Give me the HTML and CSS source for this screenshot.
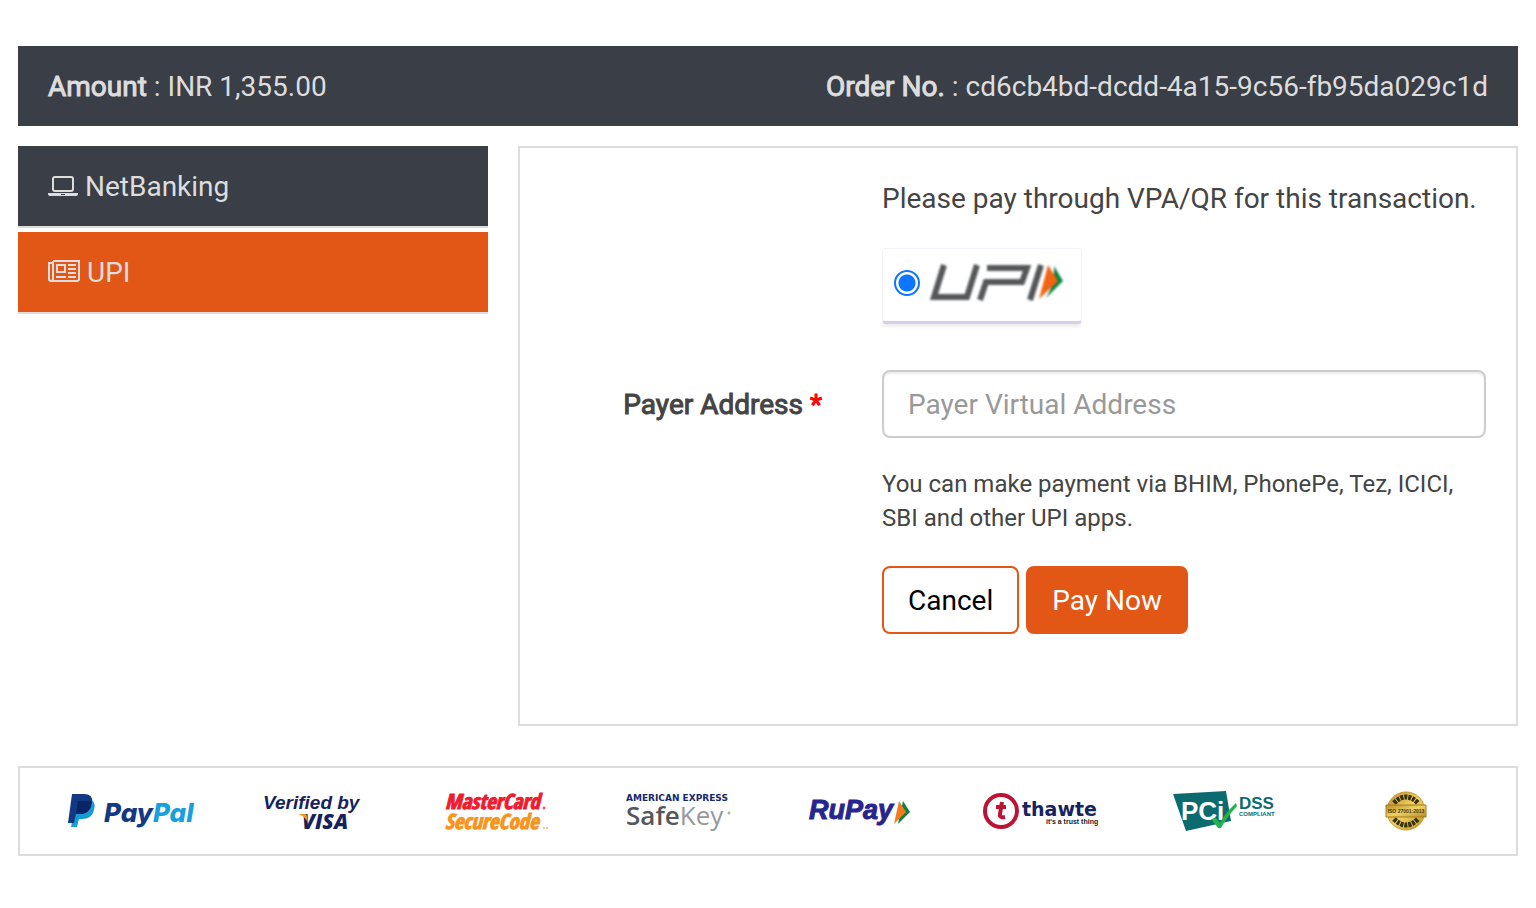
FILE: index.html
```html
<!DOCTYPE html>
<html lang="en">
<head>
<meta charset="utf-8">
<meta name="viewport" content="width=device-width, initial-scale=1">
<title>Payment</title>
<link rel="stylesheet" href="styles.css">
</head>
<body>
<header class="summary">
  <div><span class="strong">Amount</span> : INR 1,355.00</div>
  <div><span class="strong">Order No.</span> : cd6cb4bd-dcdd-4a15-9c56-fb95da029c1d</div>
</header>
<main class="layout">
  <nav class="methods">
    <a class="method" href="#netbanking">
      <svg width="30" height="24" viewBox="0 0 30 24" fill="none" stroke="currentColor" stroke-width="2"><rect x="5" y="2" width="20" height="14" rx="2"/><path fill="currentColor" stroke="none" d="M0 18h30v1q0 2-3 2H3q-3 0-3-2z"/><path class="notch" stroke-width="1" d="M13 19.500h4"/></svg>
      <span>NetBanking</span>
    </a>
    <a class="method active" href="#upi" aria-current="page">
      <svg width="32" height="26" viewBox="0 0 32 26" fill="none" stroke="currentColor" stroke-width="2"><path d="M5 1h26v18q0 2-2 2H3q-2 0-2-2V3h4M5 1v18q0 2-2 2"/><path d="M9 5h8v7H9zM20 5h8M20 9h8M20 13h8M8 17h10M20 17h8"/></svg>
      <span>UPI</span>
    </a>
  </nav>
  <form class="panel">
    <p class="field">Please pay through VPA/QR for this transaction.</p>
    <label class="field upi-card">
      <input type="radio" name="mode" checked aria-label="UPI">
      <svg class="upi-logo" width="136" height="42" viewBox="0 0 136 42" aria-hidden="true"><g fill="none" stroke="#555759" stroke-width="6"><path d="M14 3L4 35h33L47 3"/><path d="M50 38L56 20h36L97 6H57M111 3L100 38"/></g><path fill="#0c8345" d="M124 4l9 15-17 17 8-16z"/><path fill="#f26411" d="M118 3l10 16-19 18z"/></svg>
    </label>
    <label class="field-label" for="vpa">Payer Address <span class="required">*</span></label>
    <input class="vpa" id="vpa" type="text" placeholder="Payer Virtual Address">
    <p class="field note">You can make payment via BHIM, PhonePe, Tez, ICICI, SBI and other UPI apps.</p>
    <div class="field actions">
      <button class="btn" type="button">Cancel</button>
      <button class="btn primary" type="button">Pay Now</button>
    </div>
  </form>
</main>
<footer class="partners">
  <svg class="logo" viewBox="0 0 130 46" role="img" aria-label="PayPal">
    <path fill="#179bd7" d="M10 12h16q4 4 2 10-2 9-12 9h-3l-2 8H5z"/>
    <path fill="#123984" d="M6 6h12q9 0 8 8-1 12-12 12h-4l-2 9H2z"/>
    <path fill="#0b2466" d="M12 13h13q1 3-1 7-3 6-10 6h-4z"/>
    <text class="paypal" x="38" y="34"><tspan fill="#123984">Pay</tspan><tspan fill="#179fde">Pal</tspan></text>
  </svg>
  <svg class="logo" viewBox="0 0 130 46" role="img" aria-label="Verified by Visa">
    <text class="verified" x="15" y="21">Verified by</text>
    <text class="visa" x="54" y="41">VISA</text>
    <path fill="#f7981d" d="M50 26h7q2 0 2 3l1 6q-3-7-10-9z"/>
  </svg>
  <svg class="logo" viewBox="0 0 130 46" role="img" aria-label="MasterCard SecureCode">
    <text class="mastercard red" x="15" y="21">MasterCard</text>
    <text class="mastercard orange" x="15" y="41">SecureCode</text>
    <circle cx="114" cy="20" r="1" fill="none" stroke="#ee1c2e"/><path stroke="#f7941d" d="M113 40h2M116 40h2"/>
  </svg>
  <svg class="logo" viewBox="0 0 130 46" role="img" aria-label="American Express SafeKey">
    <text class="amex" x="14" y="13">AMERICAN EXPRESS</text>
    <text class="safekey" x="14" y="37"><tspan class="safe">Safe</tspan><tspan fill="#96989b">Key</tspan></text>
    <circle cx="117" cy="25" r="1" fill="none" stroke="#96989b"/>
  </svg>
  <svg class="logo" viewBox="0 0 130 46" role="img" aria-label="RuPay">
    <text class="rupay" x="15" y="31">RuPay</text>
    <path fill="#0c8345" d="M109 13l7 11-12 12z"/><path fill="#f47b20" d="M105 13l7 11-12 12z"/>
  </svg>
  <svg class="logo" viewBox="0 0 130 46" role="img" aria-label="thawte">
    <circle cx="25" cy="23" r="16" fill="none" stroke="#bd1234" stroke-width="4"/>
    <path fill="none" stroke="#bd1234" stroke-width="4" d="M26 14l-2 12q-1 4 5 3M20 19h10"/>
    <text class="thawte" x="46" y="28">thawte</text>
    <text class="trust" x="70" y="36">it's a trust thing</text>
  </svg>
  <svg class="logo" viewBox="0 0 130 46" role="img" aria-label="PCI DSS Compliant">
    <path fill="#0d6b70" d="M15 6l53-3 5 30-45 10z"/>
    <text class="pci" x="23" y="32">PCi</text>
    <path fill="#22b34b" d="M53 31l5-1 4 5q5-10 16-20l1 3q-10 11-16 22h-3q-3-4-7-9z"/>
    <text class="dss" x="81" y="21">DSS</text>
    <text class="compliant" x="81" y="28">COMPLIANT</text>
  </svg>
  <svg class="logo" viewBox="0 0 130 46" role="img" aria-label="ISO 27001:2013">
    <defs><linearGradient id="gold" x2="1" y2="1"><stop stop-color="#b88a25"/><stop offset=".5" stop-color="#f0d264"/><stop offset="1" stop-color="#b98b20"/></linearGradient></defs>
    <circle cx="66" cy="23" r="19" fill="url(#gold)" stroke="#c39a32"/>
    <path d="M54 15q12-12 24 0M54 31q12 12 24 0" fill="none" stroke="#37300f" stroke-width="5" stroke-dasharray="3 1"/>
    <path fill="url(#gold)" stroke="#a77c1c" d="M46 17h40v12H46z"/>
    <text class="iso" x="66" y="25">ISO 27001:2013</text>
  </svg>
</footer>
</body>
</html>
```
FILE: styles.css
```css
* { box-sizing: border-box; }
body {
  margin: 0;
  padding: 46px 18px;
  background: #fff;
  color: #444;
  font: 28px/42px Roboto, sans-serif;
}
p { margin: 0; }
.summary {
  display: flex;
  justify-content: space-between;
  padding: 20px 30px 18px;
  background: #3a3e47;
  color: #ddd;
}
.strong, .field-label { -webkit-text-stroke: 1px currentColor; }
.layout {
  display: grid;
  grid-template-columns: 47fr 100fr;
  gap: 30px;
  margin-top: 20px;
}
.methods { display: flex; flex-direction: column; gap: 4px; }
.method {
  display: flex;
  align-items: center;
  gap: 7px;
  padding: 20px 30px 18px;
  border-bottom: 2px solid #ddd;
  background: #3a3e47;
  color: #ddd;
  text-decoration: none;
}
.method.active { background: #e25616; }
.notch { stroke: #3a3e47; }
.panel {
  display: grid;
  grid-template-columns: 302fr 604fr;
  column-gap: 60px;
  align-content: start;
  padding: 30px 30px 90px 0;
  border: 2px solid #ddd;
}
.field { grid-column: 2; }
.upi-card {
  display: flex;
  align-items: center;
  gap: 10px;
  width: 200px;
  height: 76px;
  margin: 28px 0 46px;
  padding: 0 12px 4px;
  border: 1px solid #f5f3fa;
  border-bottom: 3px solid #d9cced;
  border-radius: 4px;
  box-shadow: 0 4px 3px -1px #eee;
}
.upi-card input {
  width: 26px;
  height: 26px;
  margin: 0 0 0 -1px;
  appearance: none;
  border: 2px solid #0d75ff;
  border-radius: 50%;
  background: radial-gradient(circle, #0d75ff 8px, #fff 9px);
}
.upi-logo { flex: none; filter: blur(1px); }
.field-label { align-self: center; padding-top: 2px; text-align: right; }
.required { color: red; }
.vpa {
  width: 100%;
  height: 68px;
  padding: 12px 24px;
  border: 2px solid #ccc;
  border-radius: 8px;
  box-shadow: inset 0 2px 2px rgba(0, 0, 0, .08);
  color: #444;
  font: inherit;
}
.vpa::placeholder { color: #999; opacity: 1; }
.note { margin: 29px 0 31px; font-size: 24px; line-height: 34px; }
.actions { display: flex; gap: 7px; }
.btn {
  height: 68px;
  padding: 2px 24px 0;
  border: 2px solid #e25616;
  border-radius: 8px;
  background: #fff;
  color: #000;
  font: inherit;
}
.btn.primary { background: #e25616; color: #fff; }
.partners {
  display: grid;
  grid-template-columns: repeat(8, 1fr);
  justify-items: center;
  margin-top: 40px;
  padding: 20px;
  border: 2px solid #ddd;
}
.logo { display: block; width: 130px; height: 46px; }
.paypal { font: italic 800 26px Inter, sans-serif; }
.verified { font: italic 700 19px "Liberation Sans", sans-serif; fill: #14235f; }
.visa { font: italic 800 21px "Open Sans", sans-serif; fill: #14235f; }
.mastercard { font: italic 800 21px "Liberation Sans Narrow", "Open Sans Condensed", "Roboto Condensed", "Open Sans", sans-serif; stroke-width: 1px; paint-order: stroke; }
.red { fill: #ee1c2e; stroke: #ee1c2e; }
.orange { fill: #f7941d; stroke: #f7941d; }
.amex { font: 700 9px "DejaVu Sans", sans-serif; fill: #14286e; }
.safekey { font: 400 26px "Open Sans", sans-serif; }
.safe { font-weight: 600; fill: #55565a; }
.rupay { font: italic 700 27px "Liberation Sans", sans-serif; fill: #26268c; stroke: #26268c; }
.thawte { font: 700 19px "DejaVu Sans", sans-serif; fill: #16245e; }
.trust { font: 700 7px "Liberation Sans", sans-serif; fill: #222; }
.pci { font: 700 26px "Liberation Sans", sans-serif; fill: #fff; }
.dss { font: 700 17px "Liberation Sans", sans-serif; fill: #0d6b70; }
.compliant { font: 700 6px "Liberation Sans", sans-serif; fill: #0d6b70; }
.iso { font: 700 5px "Liberation Sans", sans-serif; fill: #4a360c; text-anchor: middle; }
```
